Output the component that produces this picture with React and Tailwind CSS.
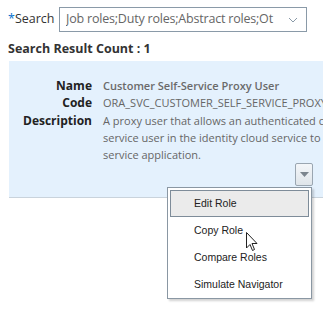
import React from "react";

const fields = [
  { label: "Name", value: "Customer Self-Service Proxy User", bold: true },
  { label: "Code", value: "ORA_SVC_CUSTOMER_SELF_SERVICE_PROXY_USER" },
];

const menuItems = ["Edit Role", "Copy Role", "Compare Roles", "Simulate Navigator"];

const App = () => {
  return (
    <div className="relative w-[323px] h-[319px] bg-white overflow-hidden font-['Open_Sans',sans-serif] text-[#333]">
      {/* Search row */}
      <div className="flex items-center pt-[7px] pl-[8px]">
        <label className="text-[12.5px] text-[#333] w-[51px]">
          <span className="text-[#0572ce]">*</span>Search
        </label>
        <div className="flex items-center w-[248px] h-[25px] border border-[#8a9aa8] bg-white pl-[6px] pr-[8px]">
          <span className="flex-1 overflow-hidden whitespace-nowrap text-[12.5px] text-[#666] tracking-[-0.2px]">
            Job roles;Duty roles;Abstract roles;Ot
          </span>
          <svg width="10" height="6" viewBox="0 0 10 6" className="ml-[6px] shrink-0">
            <path d="M1 1 L5 5 L9 1" fill="none" stroke="#8a9aa8" strokeWidth="1" />
          </svg>
        </div>
      </div>

      <div className="pl-[8px] pt-[8px] text-[12.5px] font-bold text-[#333]">Search Result Count : 1</div>

      {/* Result panel */}
      <div className="ml-[9px] mt-[2px] h-[137px] bg-[#e4f1fd] border-b border-[#c9d3dc] pt-[17px] relative overflow-hidden">
        <div className="flex flex-col">
          {fields.map((f) => (
            <div key={f.label} className="flex h-[17px] items-center">
              <div className="w-[83px] text-right text-[12px] font-bold text-[#222] shrink-0">{f.label}</div>
              <div
                className={`pl-[11px] whitespace-nowrap text-[11px] ${
                  f.bold ? "font-semibold text-[#6a6a6a]" : "text-[#666]"
                }`}
              >
                {f.value}
              </div>
            </div>
          ))}
          <div className="flex">
            <div className="w-[83px] text-right text-[12px] font-bold text-[#222] shrink-0 leading-[17px]">
              Description
            </div>
            <div className="pl-[11px] w-[300px] shrink-0 text-[11px] leading-[17px] text-[#666]">
              A proxy user that allows an authenticated customer self-service user in the identity cloud service to access the
              service application.
            </div>
          </div>
        </div>
        <button className="absolute left-[286px] top-[102px] w-[18px] h-[23px] rounded-[2px] border border-[#9aa6b1] bg-gradient-to-b from-[#f3f6f9] to-[#dfe5ea] flex items-center justify-center">
          <svg width="9" height="5" viewBox="0 0 9 5">
            <path d="M0 0 L9 0 L4.5 5 Z" fill="#7b858e" />
          </svg>
        </button>
      </div>

      {/* Menu */}
      <div className="absolute left-[167px] top-[187px] w-[145px] h-[112px] bg-white border border-[#8a97a3] shadow-[2px_2px_2px_rgba(0,0,0,0.18)] pt-[2px] px-[2px] font-['Liberation_Sans',Arial,sans-serif] text-[10.5px] text-[#222]">
        {menuItems.map((item, i) => (
          <div
            key={item}
            className={`h-[27px] flex items-center pl-[23px] ${
              i === 0 ? "bg-[#ebebeb] border border-[#7e8c99]" : "border border-transparent"
            }`}
          >
            {item}
          </div>
        ))}
      </div>

      {/* Cursor */}
      <svg className="absolute left-[246px] top-[232px]" width="13" height="21" viewBox="0 0 13 21">
        <path
          d="M0.5 0.5 L0.5 16 L4 12.5 L6.5 18.5 L8.5 17.5 L6 11.5 L11 11.5 Z"
          fill="white"
          stroke="#222"
          strokeWidth="1"
          strokeLinejoin="round"
        />
      </svg>
    </div>
  );
};

export default App;
